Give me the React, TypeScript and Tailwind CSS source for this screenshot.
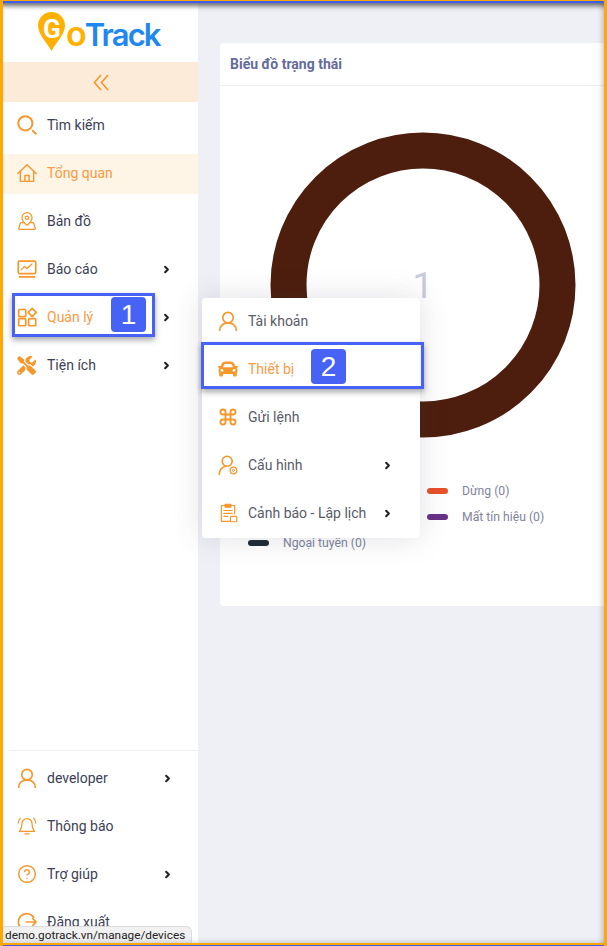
import type { ReactNode } from "react";
import { ChevronRight, CircleHelp, Command, MapPinned } from "lucide-react";
import { FaCar, FaTools } from "react-icons/fa";

const ICON = "#f7962b";

function svgIcon(children: ReactNode) {
  return (
    <svg width="20" height="20" viewBox="0 0 24 24" fill="none" stroke={ICON} strokeWidth="2" strokeLinecap="round" strokeLinejoin="round">
      {children}
    </svg>
  );
}

const SearchIcon = () =>
  svgIcon(
    <>
      <circle cx="10" cy="10" r="8.500" strokeWidth="2.400" />
      <path d="M19 19l3.500 3.500" strokeWidth="2.400" />
    </>
  );

const HomeIcon = () =>
  svgIcon(
    <g strokeWidth="1.700">
      <path d="M1 12.500L12 2l11 10.500" />
      <path d="M4 10.500V22h16V10.500" />
      <path d="M9.500 22v-7h5v7" />
    </g>
  );

const UserIcon = () =>
  svgIcon(
    <>
      <circle cx="12" cy="8" r="6.300" />
      <path d="M2 23.500c0-5.500 4.500-9.300 10-9.300s10 3.800 10 9.300" />
    </>
  );

const ReportIcon = () =>
  svgIcon(
    <>
      <rect x="1.500" y="2.500" width="21" height="15" rx="1.500" />
      <path d="M5 13l4-4 3 2.500 6-5.500" strokeWidth="1.500" />
      <path d="M3 21.500h18" />
    </>
  );

const ManageIcon = () =>
  svgIcon(
    <>
      <rect x="2" y="3" width="8.500" height="8.500" rx="1" />
      <rect x="2" y="14" width="8.500" height="8.500" rx="1" />
      <rect x="14" y="14" width="8.500" height="8.500" rx="1" />
      <path d="M18.200 1.500l4.800 5-4.800 5-4.800-5z" />
    </>
  );

const BellIcon = () =>
  svgIcon(
    <g strokeWidth="1.500">
      <path d="M12 3a6 6 0 0 0-6 6c0 6-2 8-3 9.500h18c-1-1.500-3-3.500-3-9.500a6 6 0 0 0-6-6z" />
      <path d="M9.500 21.500h5" />
      <path d="M4 2.500C2.500 4 1.500 6 1.500 8.500M20 2.500c1.500 1.500 2.500 3.500 2.500 6" />
    </g>
  );

const ConfigIcon = () =>
  svgIcon(
    <>
      <circle cx="11" cy="7.500" r="6" />
      <path d="M1.500 23.500c0-5 3-9.500 8-10" />
      <circle cx="18.500" cy="18.500" r="4" strokeWidth="1.500" fill="#fff" />
      <circle cx="18.500" cy="18.500" r="1.300" strokeWidth="1.200" />
    </>
  );

const AlertIcon = () =>
  svgIcon(
    <g strokeWidth="1.400">
      <path d="M8 3H4v19h11" />
      <path d="M16 3h4v10" />
      <rect x="8.500" y="1.500" width="7" height="3.500" fill={ICON} />
      <path d="M7 9h10M7 12.500h10M7 16h5" />
      <rect x="15" y="16" width="7.500" height="6.500" rx="1" />
    </g>
  );

const LogoutIcon = () =>
  svgIcon(
    <>
      <path d="M20 6.500A10 10 0 1 0 20 17.500" />
      <path d="M11 12h12M19 8l4 4-4 4" />
    </>
  );

function Chevron() {
  return <ChevronRight size={11} strokeWidth={4.500} color="#222" />;
}

type RowProps = { icon: ReactNode; label: string; arrow?: boolean; active?: boolean; accent?: boolean };

function SideRow({ icon, label, arrow, active, accent }: RowProps) {
  return (
    <div
      className={`flex h-10 items-center mb-2 pb-[2px] pl-[14px] pr-[26px] ${active ? "bg-[#fef5e7]" : ""} ${
        active || accent ? "text-[#fb9a44]" : "text-[#3d4055]"
      }`}
    >
      <span className="w-[30px] shrink-0">{icon}</span>
      <span className="flex-1 text-[14px]">{label}</span>
      {arrow && <Chevron />}
    </div>
  );
}

function MenuRow({ icon, label, arrow, active }: RowProps) {
  return (
    <div className={`flex h-12 items-center pb-[2px] pl-4 pr-[27px] ${active ? "text-[#fb9a44]" : "text-[#595b66]"}`}>
      <span className="w-[30px] shrink-0">{icon}</span>
      <span className="flex-1 text-[14px]">{label}</span>
      {arrow && <Chevron />}
    </div>
  );
}

function Legend({ color, label }: { color: string; label: string }) {
  return (
    <div className="flex h-[26px] items-center gap-[14px]">
      <span className="h-[6px] w-[21px] rounded-full" style={{ backgroundColor: color }} />
      <span className="text-[12.200px] text-[#80849c]">{label}</span>
    </div>
  );
}

function Logo() {
  return (
    <div className="flex h-[62px] items-start pl-[35px] pt-[12px]">
      <div className="relative h-[39px] w-[27px] shrink-0">
        <svg width="27" height="39" viewBox="0 0 27 39">
          <path d="M13.500 0C6 0 0 6 0 13.500c0 9 9 17 13.500 25.500C18 30.500 27 22.500 27 13.500 27 6 21 0 13.500 0z" fill="#ffb000" />
        </svg>
        <span className="absolute left-[5px] top-[-2px] text-[26px] font-bold leading-[38px] text-white">G</span>
      </div>
      <span className="mt-[4px] ml-[1px] text-[31px] font-semibold leading-[36px] tracking-[-1.900px] text-[#1e88f0] font-['Inter',sans-serif]">
        <span className="text-[34px] text-[#ffb000]">o</span>Track
      </span>
    </div>
  );
}

function Callout({ n, className, badge }: { n: string; className: string; badge: string }) {
  return (
    <div className={`absolute border-[3px] border-[#4763f5] shadow-[0_3px_6px_rgba(0,0,0,0.35)] ${className}`}>
      <span className={`absolute flex h-[35px] w-[35px] items-center justify-center rounded-sm bg-[#4763f5] text-[28px] text-white font-['Liberation_Sans',sans-serif] ${badge}`}>
        {n}
      </span>
    </div>
  );
}

export default function App() {
  return (
    <div className="relative flex h-[946px] w-[607px] overflow-hidden bg-[#eef0f5] pl-[3px] font-['Roboto',sans-serif]">
      <aside className="flex h-full w-[195px] shrink-0 flex-col bg-white">
        <Logo />
        <div className="flex h-10 items-center justify-center bg-[#fcebd9]">
          <svg width="16" height="17" viewBox="0 0 16 17" fill="none" stroke={ICON} strokeWidth="1.600">
            <path d="M8 1L1.500 8.500 8 16M15 1L8.500 8.500 15 16" />
          </svg>
        </div>
        <nav className="pt-1">
          <SideRow icon={<SearchIcon />} label="Tìm kiếm" />
          <SideRow active icon={<HomeIcon />} label="Tổng quan" />
          <SideRow icon={<MapPinned size={20} color={ICON} strokeWidth={1.500} />} label="Bản đồ" />
          <SideRow icon={<ReportIcon />} label="Báo cáo" arrow />
          <SideRow accent icon={<ManageIcon />} label="Quản lý" arrow />
          <SideRow icon={<FaTools size={19} color={ICON} />} label="Tiện ích" arrow />
        </nav>
        <div className="mt-auto mb-[-5px] ml-[6px] mr-[-1px] border-t border-[#eceef2] pt-[8px]">
          <div className="-ml-[6px]">
            <SideRow icon={<UserIcon />} label="developer" arrow />
            <SideRow icon={<BellIcon />} label="Thông báo" />
            <SideRow icon={<CircleHelp size={20} color={ICON} strokeWidth={1.750} />} label="Trợ giúp" arrow />
            <SideRow icon={<LogoutIcon />} label="Đăng xuất" />
          </div>
        </div>
      </aside>

      <main className="min-w-0 flex-1 pl-[22px] pt-[43px]">
        <section className="h-[563px] w-[405px] rounded bg-white">
          <h2 className="flex h-[43px] items-center border-b border-[#eceef2] pl-[10px] text-[14px] font-bold text-[#646c9a]">
            Biểu đồ trạng thái
          </h2>
          <svg className="mx-auto mt-[46px] block" width="306" height="306" viewBox="0 0 306 306">
            <circle cx="153" cy="153" r="134.500" fill="none" stroke="#4d1e0d" strokeWidth="36" />
            <text x="153" y="166" textAnchor="middle" fontSize="37" fill="#c8cbdd">1</text>
          </svg>
          <div className="mt-[40px] grid grid-cols-[179px_1fr] pl-[28px]">
            <div className="h-[26px]" />
            <Legend color="#e8512a" label="Dừng (0)" />
            <div className="h-[26px]" />
            <Legend color="#6a3088" label="Mất tín hiệu (0)" />
            <Legend color="#1f2a33" label="Ngoại tuyến (0)" />
          </div>
        </section>
      </main>

      <div className="absolute left-[202px] top-[298px] h-[240px] w-[218px] rounded-sm bg-white shadow-[0_0_30px_rgba(60,60,90,0.16)]">
        <MenuRow icon={<UserIcon />} label="Tài khoản" />
        <MenuRow active icon={<FaCar size={20} color={ICON} />} label="Thiết bị" />
        <MenuRow icon={<Command size={20} color={ICON} strokeWidth={2.250} />} label="Gửi lệnh" />
        <MenuRow icon={<ConfigIcon />} label="Cấu hình" arrow />
        <MenuRow icon={<AlertIcon />} label="Cảnh báo - Lập lịch" arrow />
      </div>

      <Callout n="1" className="left-[12px] top-[293px] h-[44px] w-[143px]" badge="left-[96px] top-[1px]" />
      <Callout n="2" className="left-[201px] top-[342px] h-[47px] w-[223px]" badge="left-[107px] top-[4px]" />

      <div className="absolute bottom-[3px] left-[3px] h-[17px] w-[189px] rounded-tr-md border-t border-r border-[#dcdcdc] bg-[#f1f1f1] pl-[2px] text-[11.800px] leading-[17px] whitespace-nowrap text-[#222]">
        demo.gotrack.vn/manage/devices
      </div>

      <div className="pointer-events-none absolute inset-0 shadow-[inset_3px_0_0_#ffa800,inset_-3px_0_0_#ffa800,inset_0_1px_0_#ffa800,inset_0_3px_0_#3f5ef0,inset_0_-1px_0_#3f5ef0,inset_0_-3px_0_#ffa800,inset_0_9px_5px_-3px_rgba(60,60,60,0.75),inset_-8px_0_5px_-3px_rgba(80,80,80,0.3),inset_0_-7px_5px_-3px_rgba(80,80,80,0.25)]" />
    </div>
  );
}
